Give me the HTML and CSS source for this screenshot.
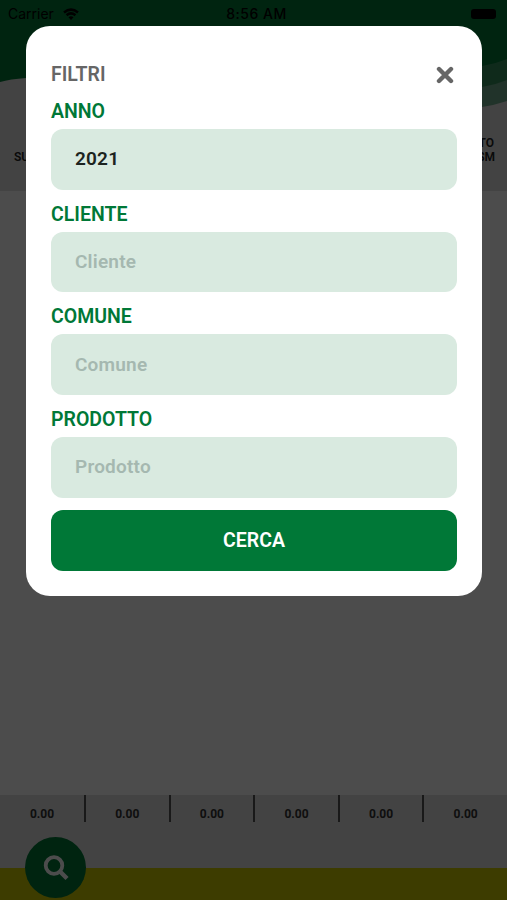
FILE: index.html
```
<!DOCTYPE html>
<html lang="it">
<head>
    <meta charset="UTF-8">
    <meta name="viewport" content="width=device-width, initial-scale=1.0">
    <title>Filtri</title>
    <link rel="stylesheet" href="styles.css">
</head>
<body>
    <div class="app">
        <header class="header">
            <!-- green waves behind the status bar -->
            <svg class="waves" viewBox="0 0 507 120" width="507" height="120">
                <path fill="#70aa8c" d="M300 0H507V101Q495 105 482 107L400 120Z"/>
                <path fill="#358d5c" d="M300 0H507V80Q495 85 482 87L400 100Z"/>
                <path fill="#007837" d="M0 0H507V59Q495 64 482 66Q420 84 300 84Q120 68 26 78Q10 79 0 82Z"/>
            </svg>
            <div class="status-bar">
                <span class="carrier">Carrier
                    <svg width="16" height="12" viewBox="0 0 16 12">
                        <path d="M8 12L5.5 9.2Q8 7.2 10.5 9.2Z"/>
                        <path d="M3.6 7.2Q8 3.5 12.4 7.2M1 4.4Q8 -1.2 15 4.4" fill="none" stroke="#000" stroke-width="2.6"/>
                    </svg>
                </span>
                <span class="time">8:56 AM</span>
                <span class="battery"></span>
            </div>
            <div class="columns">
                <span>SUP.</span>
                <span class="last">COSTO<br>TRASM</span>
            </div>
        </header>
        <main class="content"></main>
        <div class="totals">
            <span>0.00</span>
            <span>0.00</span>
            <span>0.00</span>
            <span>0.00</span>
            <span>0.00</span>
            <span>0.00</span>
        </div>
        <footer class="footer">
            <button class="search" aria-label="Cerca">
                <svg width="26" height="26" viewBox="0 0 26 26" fill="none" stroke="#fff">
                    <circle cx="11" cy="10.5" r="8.3" stroke-width="3.8"/>
                    <path d="M17 16.5L24 23.5" stroke-width="4.4"/>
                </svg>
            </button>
        </footer>
    </div>

    <div class="overlay">
        <form class="modal">
            <div class="modal-header">
                <span>FILTRI</span>
                <svg width="18" height="18" viewBox="0 0 18 18" fill="none" stroke="#666" stroke-width="4.4" stroke-linecap="round">
                    <path d="M3 3L15 15M15 3L3 15"/>
                </svg>
            </div>
            <label for="anno">ANNO</label>
            <input id="anno" type="text" value="2021">
            <label for="cliente">CLIENTE</label>
            <input id="cliente" type="text" placeholder="Cliente">
            <label for="comune">COMUNE</label>
            <input id="comune" type="text" placeholder="Comune">
            <label for="prodotto">PRODOTTO</label>
            <input id="prodotto" type="text" placeholder="Prodotto">
            <button class="submit" type="button">CERCA</button>
        </form>
    </div>
</body>
</html>
```
FILE: styles.css
```
* {
    box-sizing: border-box;
}

body {
    margin: 0;
    font-family: Roboto, sans-serif;
    overflow: hidden;
}

.app {
    width: 507px;
    height: 900px;
    display: flex;
    flex-direction: column;
    background-color: #fff;
}

.header {
    position: relative;
    height: 191px;
    background-color: #e0e0e0;
}

.waves {
    position: absolute;
    top: 0;
    left: 0;
}

.status-bar {
    position: relative;
    display: flex;
    align-items: center;
    justify-content: space-between;
    height: 27px;
    padding: 0 11px 0 8px;
    font-family: Inter, sans-serif;
    font-size: 14px;
}

.carrier {
    display: flex;
    align-items: center;
    gap: 9px;
    width: 100px;
}

.time {
    margin-left: 9px;
    font-weight: 500;
    letter-spacing: 0.5px;
}

.battery {
    width: 25px;
    height: 10px;
    margin-left: 75px;
    border-radius: 3px;
    background-color: #000;
}

.columns {
    display: flex;
    justify-content: space-between;
    align-items: flex-end;
    margin-top: 109px;
    padding: 0 12px 0 14px;
    font-size: 12px;
    line-height: 14px;
    font-weight: 600;
    color: #222;
}

.last {
    text-align: center;
}

.content {
    flex: 1;
}

.totals {
    display: flex;
    height: 73px;
    background-color: #e0e0e0;
}

.totals span {
    flex: 1;
    height: 27px;
    padding-top: 11px;
    font-size: 12px;
    line-height: 16px;
    font-weight: 700;
    text-align: center;
    color: #333;
    border-right: 2px solid #555;
}

.totals span:first-child {
    flex: 0 0 86px;
}

.totals span:last-child {
    border-right: none;
}

.footer {
    position: relative;
    height: 32px;
    background-color: #cbc800;
}

.search {
    position: absolute;
    left: 25px;
    bottom: 2px;
    display: flex;
    align-items: center;
    justify-content: center;
    width: 61px;
    height: 61px;
    padding: 0;
    border: none;
    border-radius: 50%;
    background-color: #007837;
}

.overlay {
    position: fixed;
    top: 0;
    left: 0;
    right: 0;
    bottom: 0;
    padding: 26px 25px 0 26px;
    background-color: rgba(0, 0, 0, 0.7);
}

.modal {
    display: flex;
    flex-direction: column;
    height: 570px;
    padding: 36px 25px 0;
    border-radius: 24px;
    background-color: #fff;
}

.modal-header {
    display: flex;
    align-items: center;
    justify-content: space-between;
    height: 25px;
    margin-bottom: 13px;
    padding-right: 3px;
    font-size: 19.5px;
    line-height: 25px;
    font-weight: 600;
    color: #666;
}

label {
    height: 24px;
    margin-bottom: 5px;
    font-size: 19.5px;
    line-height: 24px;
    font-weight: 600;
    color: #007837;
}

input {
    width: 100%;
    height: 60.7px;
    margin: 0 0 13px;
    padding: 0 24px 1px;
    border: none;
    border-radius: 12px;
    font-family: inherit;
    font-size: 19px;
    font-weight: 600;
    letter-spacing: 0.2px;
    color: #1c2420;
    background-color: #d9eae0;
}

input::placeholder {
    color: #a5b8b0;
}

.submit {
    height: 61px;
    margin-top: -1px;
    padding: 0;
    border: none;
    border-radius: 12px;
    font-family: inherit;
    font-size: 19.5px;
    font-weight: 600;
    color: #fff;
    background-color: #007837;
}
```
